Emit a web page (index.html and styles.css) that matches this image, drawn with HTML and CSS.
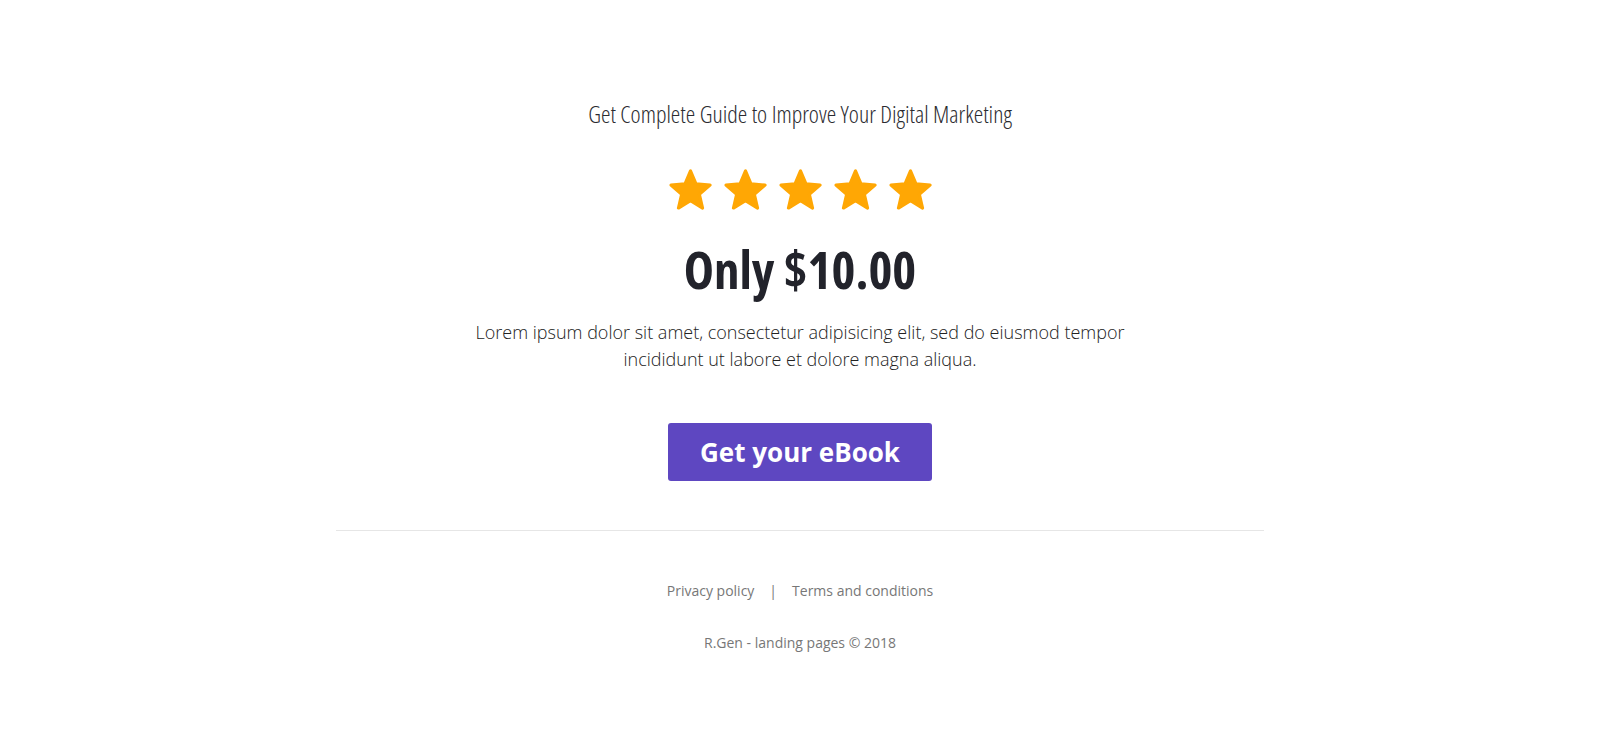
FILE: index.html
```html
<!DOCTYPE html>
<html lang="en">
<head>
<meta charset="utf-8">
<title>Get your eBook</title>
<link rel="stylesheet" href="styles.css">
</head>
<body>
<main class="page">
  <section class="offer">
    <h3 class="subtitle">Get Complete Guide to Improve Your Digital Marketing</h3>
    <div class="stars">
      <svg class="star" viewBox="1 1 22 21"><path d="M12 17.27L18.18 21l-1.64-7.03L22 9.24l-7.19-.61L12 2 9.19 8.63 2 9.24l5.46 4.73L5.82 21z"/></svg>
      <svg class="star" viewBox="1 1 22 21"><path d="M12 17.27L18.18 21l-1.64-7.03L22 9.24l-7.19-.61L12 2 9.19 8.63 2 9.24l5.46 4.73L5.82 21z"/></svg>
      <svg class="star" viewBox="1 1 22 21"><path d="M12 17.27L18.18 21l-1.64-7.03L22 9.24l-7.19-.61L12 2 9.19 8.63 2 9.24l5.46 4.73L5.82 21z"/></svg>
      <svg class="star" viewBox="1 1 22 21"><path d="M12 17.27L18.18 21l-1.64-7.03L22 9.24l-7.19-.61L12 2 9.19 8.63 2 9.24l5.46 4.73L5.82 21z"/></svg>
      <svg class="star" viewBox="1 1 22 21"><path d="M12 17.27L18.18 21l-1.64-7.03L22 9.24l-7.19-.61L12 2 9.19 8.63 2 9.24l5.46 4.73L5.82 21z"/></svg>
    </div>
    <h2 class="price">Only $10.00</h2>
    <p class="lead">Lorem ipsum dolor sit amet, consectetur adipisicing elit, sed do eiusmod tempor<br>incididunt ut labore et dolore magna aliqua.</p>
    <a class="btn" href="#">Get your eBook</a>
  </section>
  <footer class="footer">
    <nav class="links">
      <a href="#">Privacy policy</a>
      <span class="sep">|</span>
      <a href="#">Terms and conditions</a>
    </nav>
    <p class="copy">R.Gen - landing pages © 2018</p>
  </footer>
</main>
</body>
</html>
```

FILE: styles.css
```css
html, body {
  margin: 0;
  padding: 0;
  background: #fff;
}
body {
  font-family: "Open Sans", "Liberation Sans", sans-serif;
  color: #333;
}
.page {
  width: 928px;
  margin: 0 auto;
}
.offer {
  display: flex;
  flex-direction: column;
  align-items: center;
  padding-top: 99px;
  padding-bottom: 49px;
  border-bottom: 1px solid #e6e6e6;
}
.subtitle {
  margin: 0;
  font-size: 24px;
  line-height: 29px;
  font-weight: 300;
  font-stretch: 75%;
  color: #2b2b30;
}
.stars {
  display: flex;
  gap: 12px;
  margin-top: 41px;
}
.star {
  width: 43px;
  height: 41px;
  display: block;
}
.star path {
  fill: #ffa704;
  stroke: #ffa704;
  stroke-width: 1.6;
  stroke-linejoin: round;
}
.price {
  margin: 28px 0 0;
  font-size: 51px;
  line-height: 62px;
  font-weight: 700;
  font-stretch: 75%;
  color: #22232b;
}
.lead {
  margin: 19px 0 0;
  font-size: 18px;
  line-height: 27px;
  font-weight: 300;
  text-align: center;
  color: #222;
}
.btn {
  margin-top: 50px;
  display: block;
  width: 264px;
  height: 58px;
  line-height: 58px;
  box-sizing: border-box;
  text-align: center;
  background: #5e47c1;
  color: #fff;
  font-size: 26px;
  font-weight: 700;
  text-decoration: none;
  border-radius: 3px;
}
.footer {
  display: flex;
  flex-direction: column;
  align-items: center;
  padding-top: 49px;
  font-size: 14px;
  color: #777;
}
.links {
  display: flex;
  align-items: center;
  gap: 15px;
  line-height: 22px;
}
.links a {
  color: #777;
  text-decoration: none;
}
.copy {
  margin: 30px 0 0;
  line-height: 22px;
}
```
